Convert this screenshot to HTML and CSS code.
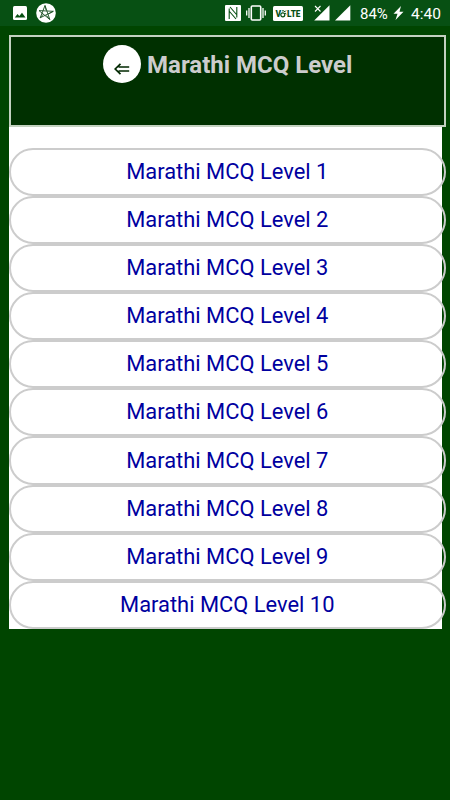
FILE: index.html
```html
<!DOCTYPE html>
<html lang="en">
<head>
<meta charset="utf-8">
<title>Marathi MCQ Level</title>
<link rel="stylesheet" href="styles.css">
</head>
<body>
<div class="status">
  <svg class="icon-picture" width="14" height="14" viewBox="0 0 14 14"><rect width="14" height="14" rx="1.5" fill="#fff"/><path d="M1.8 11.6 4.5 8l1.8 2.1L9 6.7l3.5 4.9z" fill="#075013"/></svg>
  <svg class="icon-star" width="20" height="20" viewBox="0 0 20 20"><circle cx="10" cy="10" r="9.8" fill="#fff"/><path d="M9 2.5 13.8 16.5 3 7.6 17.3 8.3 4.2 14.8z" fill="none" stroke="#174e20" stroke-width=".9"/><path d="M9 2.5 10 7M17.3 8.3 12.5 11M13.8 16.5 10.5 12.5M4.2 14.8 7.5 11" fill="none" stroke="#174e20" stroke-width=".8"/></svg>
  <span class="spacer"></span>
  <svg class="icon-nfc" width="16" height="16" viewBox="0 0 16 16"><rect width="16" height="16" rx="1" fill="#fff"/><path d="M4.2 14V3.5M11.8 2V12.5M5 2 11.5 9.5M4.5 6.5 11 14" fill="none" stroke="#075013" stroke-width="1.1"/></svg>
  <svg class="icon-vibrate" width="20" height="16" viewBox="0 0 20 16"><rect x="5.3" y="1" width="9.4" height="14" rx="1" fill="none" stroke="#fff" stroke-width="1.6"/><path d="M3 3v10M17 3v10M.7 5.5v5M19.3 5.5v5" stroke="#fff" stroke-width="1.3"/></svg>
  <svg class="icon-volte" width="30" height="15" viewBox="0 0 30 15"><rect width="30" height="15" rx="1.5" fill="#fff"/><text x="2.5" y="10.8" class="volte-text">V</text><text x="14" y="10.8" class="volte-text" textLength="13.5" lengthAdjust="spacingAndGlyphs">LTE</text><circle cx="9.8" cy="8.8" r="2" fill="none" stroke="#075013" stroke-width="1.2"/><path d="M9 5.2Q10 3.8 11 5.2T13 4.5M12 7l1.4 1" fill="none" stroke="#075013"/></svg>
  <svg class="icon-nosim" width="16" height="16" viewBox="0 0 16 16"><path d="M15.5.2V15.5H.2z" fill="#fff"/><path d="M1 1l6 6M7 1 1 7" stroke="#075013" stroke-width="2.5"/><path d="M1 1l5.5 5.5M6.5 1 1 6.5" stroke="#fff" stroke-width="1.1"/></svg>
  <svg class="icon-signal" width="16" height="16" viewBox="0 0 16 16"><path d="M15.3.2V15.5H0z" fill="#fff"/></svg>
  <span class="battery">84%</span>
  <svg class="icon-bolt" width="11" height="14" viewBox="0 0 11 14"><path d="M8 0 .5 7.7H4.5L2.5 14 10.5 5.7H6.5z" fill="#fff"/></svg>
  <span class="clock">4:40</span>
</div>
<main class="page">
  <header class="header">
    <a class="back"><svg width="16" height="12" viewBox="0 0 16 12"><path d="M15.2 4H4.5M15.2 8H4.5M6.5.8 1.2 6l5.3 5.2" fill="none" stroke="#002800" stroke-width="1.7"/></svg></a>
    <h1 class="title">Marathi MCQ Level</h1>
  </header>
  <nav class="levels">
    <a class="level"><span class="label">Marathi MCQ Level 1</span></a>
    <a class="level"><span class="label">Marathi MCQ Level 2</span></a>
    <a class="level"><span class="label">Marathi MCQ Level 3</span></a>
    <a class="level"><span class="label">Marathi MCQ Level 4</span></a>
    <a class="level"><span class="label">Marathi MCQ Level 5</span></a>
    <a class="level"><span class="label">Marathi MCQ Level 6</span></a>
    <a class="level"><span class="label">Marathi MCQ Level 7</span></a>
    <a class="level"><span class="label">Marathi MCQ Level 8</span></a>
    <a class="level"><span class="label">Marathi MCQ Level 9</span></a>
    <a class="level"><span class="label">Marathi MCQ Level 10</span></a>
  </nav>
</main>
</body>
</html>
```
FILE: styles.css
```css
* { box-sizing: border-box; }
body {
  margin: 0;
  height: 800px;
  overflow: hidden;
  background: #004500;
  font-family: Roboto, "Liberation Sans", sans-serif;
}
.status {
  display: flex;
  align-items: center;
  height: 26px;
  padding: 0 9px 0 13px;
  background: #075013;
  color: #fff;
  font-size: 16px;
}
.status svg { flex: none; display: block; }
.icon-star { margin-left: 9px; }
.spacer { flex: 1; }
.icon-vibrate { margin-left: 5px; }
.icon-volte { margin-left: 7px; }
.icon-nosim { margin-left: 11px; }
.icon-signal { margin-left: 5px; }
.battery { width: 28px; margin-left: 9px; font-size: 15px; line-height: 26px; white-space: nowrap; padding-top: 2px; }
.icon-bolt { margin-left: 5px; }
.clock { width: 30px; margin-left: 7px; font-size: 15.5px; line-height: 26px; white-space: nowrap; padding-top: 2px; }
.volte-text { font: 900 8.5px Roboto, sans-serif; fill: #075013; }
.page {
  width: 433.5px;
  height: 594px;
  margin: 9px 0 0 8.5px;
  background: #fff;
}
.header {
  display: flex;
  justify-content: center;
  align-items: flex-start;
  width: 437.5px;
  height: 92px;
  padding: 8px 0 0 1px;
  border: 2px solid #c3d1c0;
  background: #003000;
}
.back {
  display: flex;
  justify-content: center;
  width: 38px;
  height: 38px;
  padding-top: 18px;
  border-radius: 50%;
  background: #fff;
}
.title {
  margin: 0 0 0 6px;
  color: #ccc;
  font-size: 24px;
  font-weight: 700;
  line-height: 40px;
  white-space: nowrap;
}
.levels { padding-top: 20.7px; }
.level {
  display: flex;
  justify-content: center;
  align-items: center;
  width: 437.5px;
  height: 48.13px;
  padding-bottom: 1px;
  border: 2px solid #ccc;
  border-radius: 24px;
  color: #00009f;
  font-size: 21.9px;
}
```
